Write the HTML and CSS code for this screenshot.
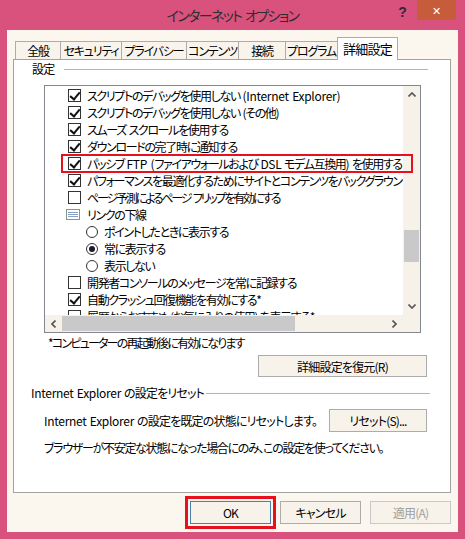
FILE: index.html
```html
<!DOCTYPE html>
<html lang="ja">

<head>
    <meta charset="UTF-8">
    <meta name="viewport" content="width=device-width, initial-scale=1.0">
    <title>インターネット オプション</title>
    <link rel="stylesheet" href="styles.css">
</head>

<body>

    <div class="window">
        <!-- Title bar -->
        <div class="titlebar">
            <div></div>
            <div class="title">インターネット オプション</div>
            <div class="controls">
                <span class="help">?</span>
                <span class="close">&#10005;</span>
            </div>
        </div>

        <div class="client">
            <div class="tabs">
                <div class="tab">全般</div>
                <div class="tab">セキュリティ</div>
                <div class="tab">プライバシー</div>
                <div class="tab">コンテンツ</div>
                <div class="tab">接続</div>
                <div class="tab">プログラム</div>
                <div class="tab active">詳細設定</div>
            </div>

            <div class="panel">
                <div class="group-title">
                    <span>設定</span>
                    <span class="rule"></span>
                </div>

                <!-- Settings list -->
                <div class="listbox">
                    <div class="list-view">
                        <div class="row"><span class="chk on"></span><span>スクリプトのデバッグを使用しない <span class="en">(Internet Explorer)</span></span></div>
                        <div class="row"><span class="chk on"></span><span>スクリプトのデバッグを使用しない (その他)</span></div>
                        <div class="row"><span class="chk on"></span><span>スムーズ スクロールを使用する</span></div>
                        <div class="row"><span class="chk on"></span><span>ダウンロードの完了時に通知する</span></div>
                        <div class="row"><span class="chk on"></span><span>パッシブ <span class="en">FTP (</span>ファイアウォールおよび <span class="en">DSL</span> モデム互換用<span class="en">)</span> を使用する</span></div>
                        <div class="row"><span class="chk on"></span><span>パフォーマンスを最適化するためにサイトとコンテンツをバックグラウンドで読み込む</span></div>
                        <div class="row long"><span class="chk"></span><span>ページ予測によるページ フリップを有効にする</span></div>
                        <div class="row group">
                            <svg class="group-icon" width="14" height="11" viewBox="0 0 14 11">
                                <rect x="0.5" y="0.5" width="13" height="10" fill="#fff" stroke="#7f9a86"/>
                                <line x1="2" y1="3.5" x2="12" y2="3.5" stroke="#8aa0c8"/>
                                <line x1="2" y1="5.5" x2="12" y2="5.5" stroke="#8aa0c8"/>
                                <line x1="2" y1="7.5" x2="12" y2="7.5" stroke="#8aa0c8"/>
                            </svg>
                            <span>リンクの下線</span>
                        </div>
                        <div class="row sub"><span class="radio"></span><span>ポイントしたときに表示する</span></div>
                        <div class="row sub"><span class="radio on"></span><span>常に表示する</span></div>
                        <div class="row sub"><span class="radio"></span><span>表示しない</span></div>
                        <div class="row"><span class="chk"></span><span>開発者コンソールのメッセージを常に記録する</span></div>
                        <div class="row"><span class="chk on"></span><span>自動クラッシュ回復機能を有効にする*</span></div>
                        <div class="row"><span class="chk"></span><span>履歴からおすすめ (お気に入りの使用) を表示する*</span></div>
                    </div>

                    <div class="vscroll">
                        <span class="arrow">
                            <svg width="8" height="5" viewBox="0 0 8 5"><path d="M0.5 4.5 L4 1 L7.5 4.5" fill="none" stroke="#555" stroke-width="1.6"/></svg>
                        </span>
                        <div class="track"><div class="thumb"></div></div>
                        <span class="arrow">
                            <svg width="8" height="5" viewBox="0 0 8 5"><path d="M0.5 0.5 L4 4 L7.5 0.5" fill="none" stroke="#555" stroke-width="1.6"/></svg>
                        </span>
                    </div>

                    <div class="hscroll">
                        <span class="arrow">
                            <svg width="5" height="8" viewBox="0 0 5 8"><path d="M4.5 0.5 L1 4 L4.5 7.5" fill="none" stroke="#555" stroke-width="1.6"/></svg>
                        </span>
                        <div class="track"><div class="thumb"></div></div>
                        <span class="arrow">
                            <svg width="5" height="8" viewBox="0 0 5 8"><path d="M0.5 0.5 L4 4 L0.5 7.5" fill="none" stroke="#555" stroke-width="1.6"/></svg>
                        </span>
                    </div>
                    <div class="corner"></div>

                    <!-- red highlight drawn over the list -->
                    <div class="mark"></div>
                </div>

                <div class="note">*コンピューターの再起動後に有効になります</div>

                <div class="restore-row">
                    <button class="btn restore">詳細設定を復元(R)</button>
                </div>

                <div class="group-title reset-title">
                    <span><span class="en">Internet Explorer</span> の設定をリセット</span>
                    <span class="rule"></span>
                </div>

                <div class="reset-row">
                    <span><span class="en">Internet Explorer</span> の設定を既定の状態にリセットします。</span>
                    <button class="btn reset">リセット(S)...</button>
                </div>

                <div class="hint">ブラウザーが不安定な状態になった場合にのみ、この設定を使ってください。</div>
            </div>

            <div class="footer">
                <button class="btn ok">OK</button>
                <button class="btn">キャンセル</button>
                <button class="btn" disabled>適用(A)</button>
            </div>
        </div>
    </div>

</body>

</html>
```

FILE: styles.css
```css
* {
    margin: 0;
    padding: 0;
    box-sizing: border-box;
}

body {
    font-family: "Noto Sans CJK JP", "Noto Sans", sans-serif;
    font-feature-settings: "palt";
    font-size: 12px;
    letter-spacing: -0.8px;
    color: #000;
    background-color: #d9517d;
}

.en {
    letter-spacing: -0.3px;
}

.window {
    width: 465px;
    height: 539px;
    background-color: #d9517d;
    padding: 0 7px 7px 7px;
    display: flex;
    flex-direction: column;
}

/* Title bar */
.titlebar {
    height: 30px;
    display: grid;
    grid-template-columns: 1fr auto 1fr;
    align-items: start;
}

.title {
    font-size: 14px;
    letter-spacing: -1.6px;
    word-spacing: 2px;
    line-height: 30px;
    color: #2e2e2e;
}

.controls {
    display: flex;
    justify-content: flex-end;
    align-items: flex-start;
}

.help {
    font-family: "Liberation Sans", sans-serif;
    font-weight: bold;
    font-size: 14px;
    line-height: 24px;
    color: #2a2a3a;
    margin-right: 11px;
}

.close {
    width: 39px;
    height: 20px;
    margin-right: 2px;
    background-color: #c65c3a;
    color: #fff;
    font-size: 11px;
    line-height: 20px;
    text-align: center;
}

/* Dialog body */
.client {
    flex: 1;
    background-color: #fbf7ef;
    padding: 7px 7px 0 6px;
    display: flex;
    flex-direction: column;
}

.tabs {
    height: 22px;
    display: flex;
    align-items: flex-end;
    padding-left: 2px;
}

.tab {
    height: 18px;
    border: 1px solid #acacac;
    border-bottom: none;
    margin-left: -1px;
    background-color: #f8f4ec;
    text-align: center;
    line-height: 17px;
    letter-spacing: -1.2px;
    white-space: nowrap;
}

.tab:nth-child(1) { width: 46px; margin-left: 0; }
.tab:nth-child(2) { width: 62px; }
.tab:nth-child(3) { width: 66px; }
.tab:nth-child(4) { width: 53px; }
.tab:nth-child(5) { width: 48px; }
.tab:nth-child(6) { width: 53px; }

.tab.active {
    width: 61px;
    height: 23px;
    margin-bottom: -1px;
    background-color: #fff;
    position: relative;
    line-height: 21px;
    font-size: 13px;
    letter-spacing: -0.8px;
}

.panel {
    height: 434px;
    border: 1px solid #a3a3a3;
    background-color: #fff;
    padding: 1px 0 0 0;
}

.group-title {
    display: flex;
    align-items: center;
    height: 16px;
    line-height: 16px;
    padding-left: 18px;
    padding-right: 22px;
    white-space: nowrap;
}

.group-title .rule {
    flex: 1;
    margin-left: 10px;
    border-top: 1px solid #b4b4b4;
}

/* List box */
.listbox {
    position: relative;
    width: 377px;
    height: 248px;
    margin: 8px 0 0 30px;
    border: 1px solid #828790;
    display: grid;
    grid-template-columns: 1fr 17px;
    grid-template-rows: 1fr 17px;
    background-color: #fff;
}

.list-view {
    overflow: hidden;
    padding-top: 1px;
}

.row {
    height: 17px;
    display: flex;
    align-items: center;
    gap: 6px;
    padding-left: 23px;
    white-space: nowrap;
    letter-spacing: -1.35px;
    word-spacing: 1.2px;
}

.row.long {
    letter-spacing: -2.2px;
    word-spacing: 2px;
}

.row.group {
    padding-left: 21px;
    gap: 7px;
}

.row.sub {
    padding-left: 41px;
}

.chk {
    flex: none;
    width: 13px;
    height: 13px;
    border: 1px solid #333;
    background-color: #fff;
    position: relative;
}

.chk.on::after {
    content: "";
    position: absolute;
    left: 3px;
    top: 0px;
    width: 4px;
    height: 8px;
    border-right: 2px solid #111;
    border-bottom: 2px solid #111;
    transform: rotate(40deg);
}

.radio {
    flex: none;
    width: 12px;
    height: 12px;
    border: 1px solid #333;
    border-radius: 50%;
    display: flex;
    justify-content: center;
    align-items: center;
}

.radio.on::after {
    content: "";
    width: 6px;
    height: 6px;
    border-radius: 50%;
    background-color: #1b1b2e;
}

.group-icon {
    flex: none;
}

.vscroll,
.hscroll {
    display: flex;
    background-color: #f6f2ea;
}

.vscroll {
    flex-direction: column;
}

.arrow {
    flex: none;
    width: 17px;
    height: 17px;
    display: flex;
    justify-content: center;
    align-items: center;
}

.track {
    flex: 1;
}

.vscroll .thumb {
    width: 15px;
    height: 32px;
    margin: 127px 0 0 1px;
    background-color: #c9c9c9;
}

.hscroll .thumb {
    width: 233px;
    height: 15px;
    margin: 1px 0 0 0;
    background-color: #c9c9c9;
}

.corner {
    background-color: #f6f2ea;
}

.mark {
    position: absolute;
    left: 16px;
    top: 68px;
    width: 352px;
    height: 19px;
    border: 2px solid #e8101c;
}

.note {
    margin: 2px 0 0 34px;
    line-height: 16px;
    letter-spacing: -1.8px;
}

.restore-row {
    display: flex;
    justify-content: flex-end;
    padding-right: 23px;
    margin-top: 4px;
}

.btn {
    font-family: inherit;
    font-feature-settings: "palt";
    font-size: 12px;
    letter-spacing: -0.8px;
    color: #000;
    height: 23px;
    border: 1px solid #acacac;
    background-color: #f7f3eb;
}

.btn.restore {
    width: 169px;
    height: 22px;
}

.reset-title {
    margin-top: 8px;
    padding-left: 17px;
    padding-right: 20px;
    word-spacing: 1px;
}

.reset-title .rule {
    margin-left: 2px;
}

.reset-row {
    display: flex;
    justify-content: space-between;
    align-items: center;
    margin-top: 8px;
    padding: 0 23px 0 30px;
    white-space: nowrap;
    word-spacing: 1px;
}

.btn.reset {
    width: 98px;
}

.hint {
    margin: 8px 0 0 30px;
    line-height: 16px;
    letter-spacing: -1.3px;
    white-space: nowrap;
}

/* Bottom buttons */
.footer {
    display: flex;
    justify-content: flex-end;
    gap: 9px;
    margin-top: 8px;
}

.footer .btn {
    width: 81px;
}

.btn.ok {
    border-color: #4a7fb0;
    outline: 3px solid #e8101c;
    outline-offset: 2px;
}

.btn:disabled {
    color: #a0a0a0;
    border-color: #c8c8c8;
}
```
